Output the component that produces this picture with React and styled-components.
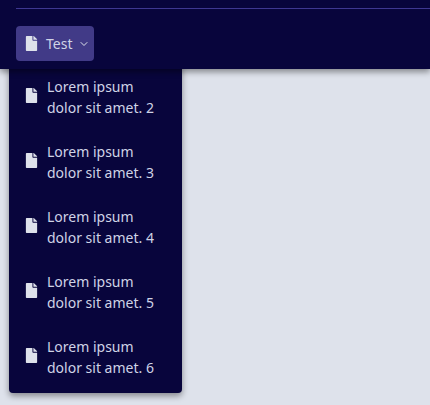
import React from 'react';
import styled, { createGlobalStyle } from 'styled-components';
import { FaFile } from 'react-icons/fa';
import { FiChevronDown } from 'react-icons/fi';

const GlobalStyle = createGlobalStyle`
  html, body {
    margin: 0;
    height: 100%;
    background: #dee2eb;
    font-family: "Noto Sans", "Open Sans", sans-serif;
  }
`;

const items = [2, 3, 4, 5, 6];

const App = () => {
  return (
    <Page>
      <GlobalStyle />
      <Header>
        <Divider />
        <TabRow>
          <TabButton>
            <FaFile size={15} />
            <span>Test</span>
            <FiChevronDown size={12} />
          </TabButton>
        </TabRow>
      </Header>
      <Menu>
        {items.map((n) => (
          <MenuItem key={n}>
            <ItemIcon>
              <FaFile size={15} />
            </ItemIcon>
            <MenuLabel>Lorem ipsum dolor sit amet. {n}</MenuLabel>
          </MenuItem>
        ))}
      </Menu>
    </Page>
  );
};

const Page = styled.div`
  position: relative;
  width: 430px;
  height: 405px;
  overflow: hidden;
`;
const Header = styled.header`
  position: relative;
  z-index: 2;
  height: 69px;
  padding: 8px 0 0 16px;
  box-sizing: border-box;
  background: #08053c;
  box-shadow: 0 3px 6px rgba(0, 0, 0, 0.4);
`;
const Divider = styled.div`
  height: 1px;
  background: #3e3791;
`;
const TabRow = styled.div`
  display: flex;
  margin-top: 17px;
`;
const TabButton = styled.button`
  display: flex;
  align-items: center;
  width: 78px;
  height: 35px;
  padding: 0 0 0 8px;
  box-sizing: border-box;
  border: none;
  border-radius: 4px;
  background: #413a87;
  color: #dee2eb;
  font-family: inherit;
  font-size: 14px;
  svg:first-child {
    margin-top: -1px;
  }
  span {
    margin: 0 6px 0 7px;
    color: #cfd3e6;
  }
`;
const Menu = styled.nav`
  position: absolute;
  z-index: 1;
  top: 61px;
  left: 9px;
  width: 173px;
  height: 332px;
  padding-top: 3px;
  box-sizing: border-box;
  border-radius: 4px;
  background: #08053c;
  box-shadow: 0 3px 6px rgba(0, 0, 0, 0.4);
`;
const MenuItem = styled.a`
  display: flex;
  align-items: center;
  gap: 8px;
  height: 65px;
  padding-left: 15px;
  color: #dee2eb;
`;
const ItemIcon = styled.span`
  display: flex;
  margin-top: -3px;
`;
const MenuLabel = styled.span`
  width: 125px;
  font-size: 14px;
  line-height: 21px;
  color: #cfd3e6;
`;

export default App;
